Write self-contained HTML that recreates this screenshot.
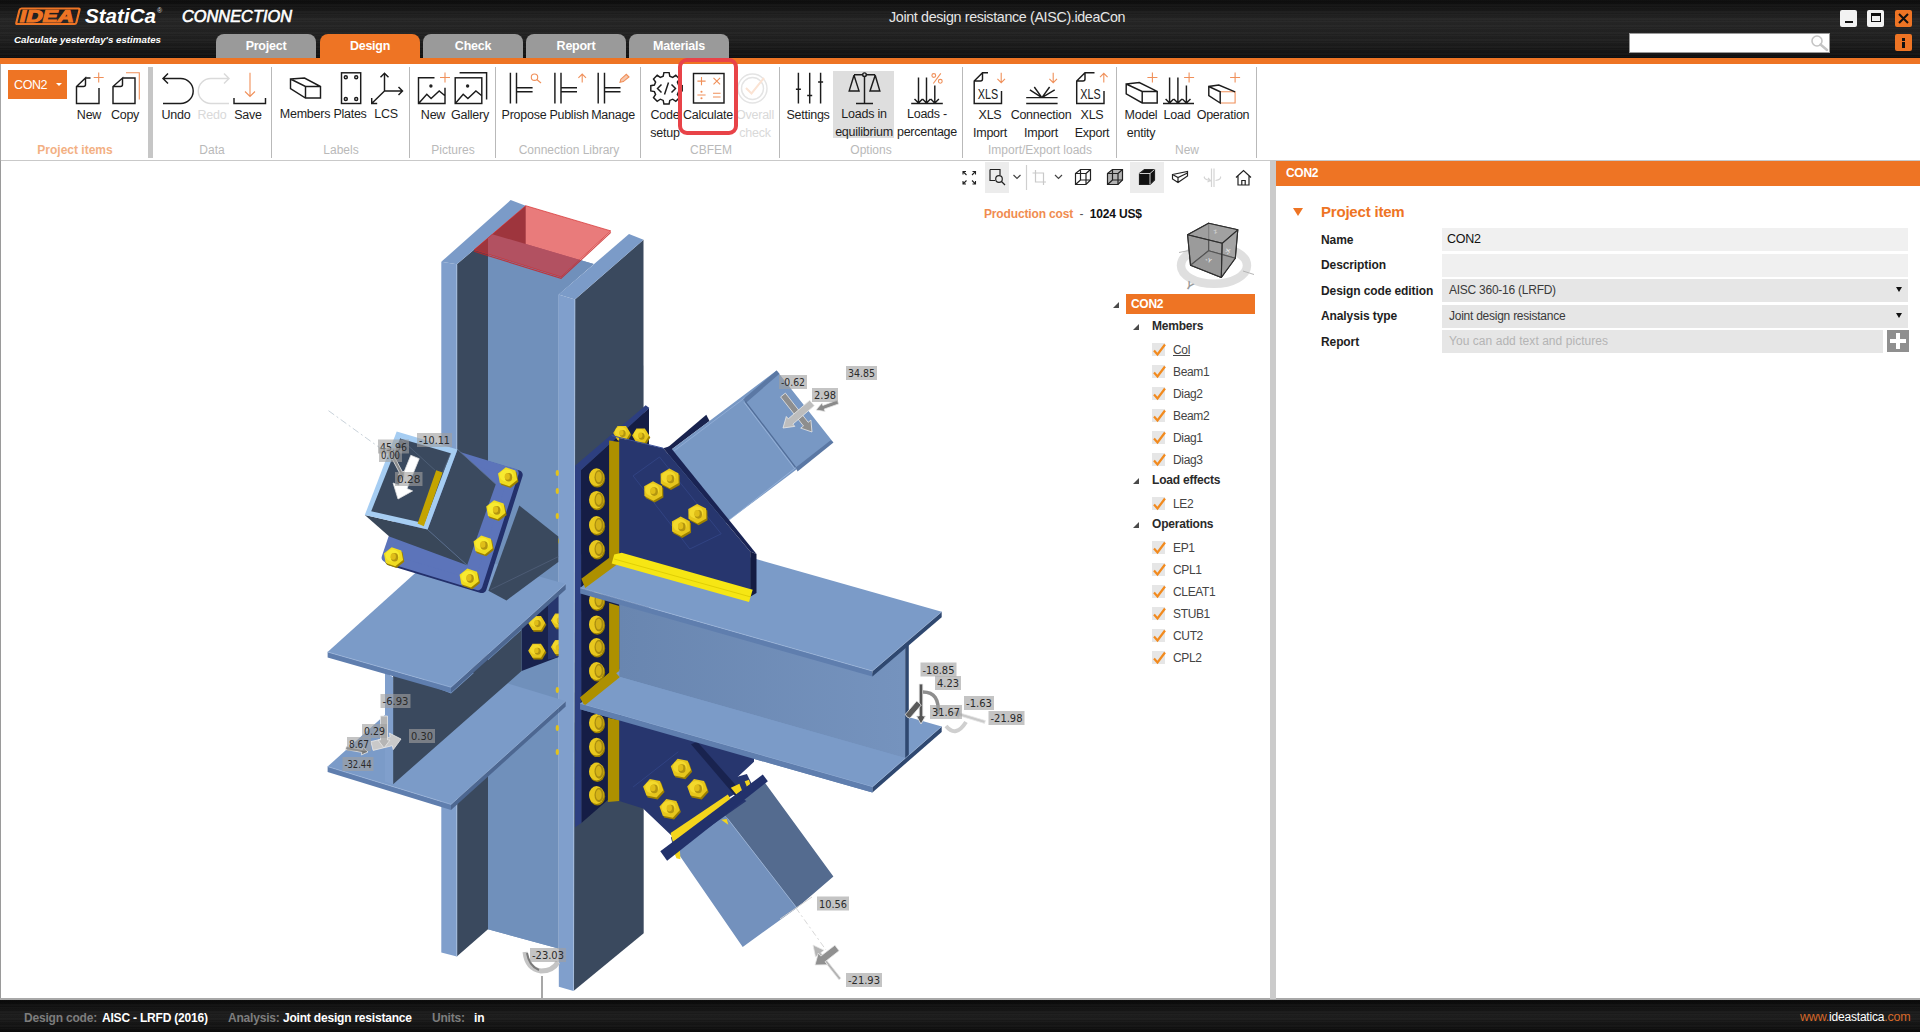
<!DOCTYPE html>
<html lang="en"><head><meta charset="utf-8"><title>IDEA StatiCa Connection</title>
<style>
html,body{margin:0;padding:0}
body{width:1920px;height:1032px;position:relative;overflow:hidden;background:#fff;font-family:"Liberation Sans",sans-serif;color:#1e1e1e}
.abs{position:absolute}
#hdr{position:absolute;left:0;top:0;width:1920px;height:58px;background:#0b0b0b;
 background-image:repeating-linear-gradient(180deg,rgba(255,255,255,.07) 0,rgba(255,255,255,0) 1px,rgba(255,255,255,.03) 2px,rgba(0,0,0,0) 3px,rgba(255,255,255,.05) 5px,rgba(0,0,0,0) 7px),linear-gradient(180deg,#080808 0,#222 35%,#1b1b1b 70%,#0b0b0b 100%)}
#obar{position:absolute;left:0;top:58px;width:1920px;height:6px;background:#ee7424}
.tab{position:absolute;top:34px;height:25px;width:100px;border-radius:8px 8px 0 0;background:#9a9a9a;color:#fff;font-weight:bold;font-size:12.5px;line-height:25px;text-align:center;letter-spacing:-.25px}
.tab.on{background:#ee7424}
#ribbon{position:absolute;left:0;top:64px;width:1920px;height:96px;background:#fff;border-bottom:1px solid #c9c9c9}
.sep{position:absolute;top:3px;width:1px;height:91px;background:#b9b9b9}
.glab{position:absolute;top:78px;height:16px;line-height:16px;font-size:12px;color:#b9b9b9;text-align:center;white-space:nowrap;transform:translateX(-50%)}
.rb{position:absolute;top:43px;font-size:12.5px;line-height:17.5px;color:#1e1e1e;text-align:center;white-space:nowrap;transform:translateX(-50%);letter-spacing:-.25px}
.rb.dis{color:#d9d9d9}
.ic{position:absolute;overflow:visible}
#status{position:absolute;left:0;top:1000px;width:1920px;height:32px;background:#0b0b0b;
 background-image:repeating-linear-gradient(180deg,rgba(255,255,255,.07) 0,rgba(255,255,255,0) 1px,rgba(255,255,255,.03) 2px,rgba(0,0,0,0) 3px,rgba(255,255,255,.05) 5px,rgba(0,0,0,0) 7px),linear-gradient(180deg,#050505 0,#1a1a1a 50%,#080808 100%)}
#status span{position:absolute;top:10px;font-size:12px;line-height:16px;font-weight:bold;white-space:nowrap;letter-spacing:-.2px}
.sg{color:#7d7d7d}.sw{color:#fff}
#split{position:absolute;left:1270px;top:161px;width:6px;height:838px;background:#cbcbcb}
#rhead{position:absolute;left:1276px;top:161px;width:644px;height:25px;background:#ee7424;color:#fff;font-weight:bold;font-size:12px;line-height:25px;text-indent:10px;letter-spacing:-.3px}
.plab{position:absolute;left:1321px;font-size:12px;line-height:16px;font-weight:bold;color:#1e1e1e;letter-spacing:-.1px;white-space:nowrap;-webkit-text-stroke:0}
.pfield{position:absolute;left:1442px;height:23px;background:#e8e8e8;font-size:12px;line-height:23px;color:#3a3a3a;white-space:nowrap}
.tree{position:absolute;font-size:12px;line-height:16px;color:#444;white-space:nowrap;letter-spacing:-.35px}
.tree.b{font-weight:bold;color:#2a2a2a;letter-spacing:-.2px;margin-left:1px}
.tri{position:absolute;width:0;height:0;border-left:6px solid transparent;border-bottom:6px solid #4a4a4a}
.cb{position:absolute;width:13px;height:13px;background:#e6e6e6}
</style></head><body>
<div id="hdr">
<svg class="abs" style="left:0;top:0" width="320" height="58" viewBox="0 0 320 58">
 <g transform="translate(14,6) skewX(-14)">
  <rect x="6.5" y="2.5" width="60" height="15.500" fill="none" stroke="#ee7424" stroke-width="2.2" rx="1.5"/>
  <text x="9" y="16.5" font-family="Liberation Sans,sans-serif" font-weight="bold" font-size="17" fill="#ee7424" stroke="#ee7424" stroke-width="1.100" textLength="54" lengthAdjust="spacingAndGlyphs">IDEA</text>
 </g>
 <text x="85" y="23" font-family="Liberation Sans,sans-serif" font-weight="bold" font-style="italic" font-size="20.5" fill="#fff" textLength="71" lengthAdjust="spacingAndGlyphs">StatiCa</text>
 <text x="157" y="13" font-family="Liberation Sans,sans-serif" font-size="7" fill="#ddd">®</text>
 <text x="182" y="22" font-family="Liberation Sans,sans-serif" font-style="italic" font-size="16.5" fill="#fff" textLength="110" lengthAdjust="spacingAndGlyphs" stroke="#fff" stroke-width=".650">CONNECTION</text>
 <text x="14" y="42.5" font-family="Liberation Sans,sans-serif" font-style="italic" font-weight="bold" font-size="9.5" fill="#fff" textLength="147" lengthAdjust="spacingAndGlyphs">Calculate yesterday's estimates</text>
</svg>
<div class="tab" style="left:216px">Project</div>
<div class="tab on" style="left:320px">Design</div>
<div class="tab" style="left:423px">Check</div>
<div class="tab" style="left:526px">Report</div>
<div class="tab" style="left:629px">Materials</div>
<div class="abs" style="left:889px;top:9px;width:234px;text-align:center;color:#e6e6e6;font-size:14.3px;line-height:16px;letter-spacing:-.35px;white-space:nowrap">Joint design resistance (AISC).ideaCon</div>
<div class="abs" style="left:1629px;top:33px;width:201px;height:20px;background:#fff;border:1px solid #999;box-sizing:border-box"></div>
<svg class="abs" style="left:1808px;top:33px" width="24" height="20" viewBox="0 0 24 20"><circle cx="9" cy="8" r="5" fill="none" stroke="#c4c4c4" stroke-width="1.6"/><path d="M12.5 11.5 L19 17" stroke="#c4c4c4" stroke-width="2.4" stroke-linecap="round"/></svg>
<div class="abs" style="left:1840px;top:10px;width:17px;height:17px;background:#f2f2f2;border-radius:2px"></div><div class="abs" style="left:1845px;top:21px;width:8px;height:2px;background:#111"></div>
<div class="abs" style="left:1867px;top:10px;width:17px;height:17px;background:#f2f2f2;border-radius:2px"></div><div class="abs" style="left:1871px;top:13px;width:10px;height:9px;border:1.5px solid #111;border-top-width:3px;box-sizing:border-box"></div>
<div class="abs" style="left:1895px;top:10px;width:17px;height:17px;background:#ee7424;border-radius:2px"></div>
<svg class="abs" style="left:1895px;top:10px" width="17" height="17" viewBox="0 0 17 17"><path d="M4 4 L13 13 M13 4 L4 13" stroke="#111" stroke-width="2"/></svg>
<div class="abs" style="left:1895px;top:34px;width:17px;height:17px;background:#ee7424;border-radius:2px"></div>
<div class="abs" style="left:1902px;top:38px;width:3px;height:3px;background:#111"></div><div class="abs" style="left:1902px;top:42px;width:3px;height:6px;background:#111"></div>
</div>
<div id="obar"></div>
<div id="ribbon">
<div class="abs" style="left:0;top:0;width:1px;height:97px;background:#a6a6a6"></div>
<div class="abs" style="left:833px;top:7px;width:61px;height:67px;background:#dedede"></div>
<div class="abs" style="left:148px;top:3px;width:5px;height:91px;background:#c6c6c6"></div>
<div class="sep" style="left:271px"></div><div class="sep" style="left:409px"></div><div class="sep" style="left:495px"></div>
<div class="sep" style="left:640px"></div><div class="sep" style="left:779px"></div><div class="sep" style="left:962px"></div>
<div class="sep" style="left:1116px"></div><div class="sep" style="left:1256px"></div>
<div class="abs" style="left:8px;top:6px;width:59px;height:29px;background:#ee7424;color:#fff;font-size:12.5px;line-height:30px;text-indent:6px;letter-spacing:-.4px">CON2</div>
<div class="abs" style="left:56px;top:19px;width:0;height:0;border-left:3px solid transparent;border-right:3px solid transparent;border-top:3.5px solid #fff"></div>
<div class="glab" style="left:75px;color:#f3b083;font-weight:bold">Project items</div>
<div class="glab" style="left:212px">Data</div>
<div class="glab" style="left:341px">Labels</div>
<div class="glab" style="left:453px">Pictures</div>
<div class="glab" style="left:569px">Connection Library</div>
<div class="glab" style="left:711px">CBFEM</div>
<div class="glab" style="left:871px">Options</div>
<div class="glab" style="left:1040px">Import/Export loads</div>
<div class="glab" style="left:1187px">New</div>
<div class="rb" style="left:89px">New</div>
<div class="rb" style="left:125px">Copy</div>
<div class="rb" style="left:176px">Undo</div>
<div class="rb dis" style="left:212px">Redo</div>
<div class="rb" style="left:248px">Save</div>
<div class="rb" style="left:305px;top:42px">Members</div>
<div class="rb" style="left:350px;top:42px">Plates</div>
<div class="rb" style="left:386px;top:42px">LCS</div>
<div class="rb" style="left:433px">New</div>
<div class="rb" style="left:470px">Gallery</div>
<div class="rb" style="left:524px">Propose</div>
<div class="rb" style="left:569px">Publish</div>
<div class="rb" style="left:613px">Manage</div>
<div class="rb" style="left:665px">Code<br>setup</div>
<div class="rb" style="left:708px">Calculate</div>
<div class="rb dis" style="left:755px">Overall<br>check</div>
<div class="rb" style="left:808px">Settings</div>
<div class="rb" style="left:864px;top:42px">Loads in<br>equilibrium</div>
<div class="rb" style="left:927px;top:42px">Loads -<br>percentage</div>
<div class="rb" style="left:990px">XLS<br>Import</div>
<div class="rb" style="left:1041px">Connection<br>Import</div>
<div class="rb" style="left:1092px">XLS<br>Export</div>
<div class="rb" style="left:1141px">Model<br>entity</div>
<div class="rb" style="left:1177px">Load</div>
<div class="rb" style="left:1223px">Operation</div>
<svg class="abs" style="left:0;top:0" width="1920" height="96" viewBox="0 64 1920 96" fill="none" stroke="#1c1c1c" stroke-width="1.45" stroke-linejoin="miter">
<g id="ic-new"><path d="M85.5 78H90.5M99 88V103.5H76.5V86.5L85.5 78V84.5Q85.5 86.5 83.5 86.5H76.5"/><path d="M98.7 72.5V82.5M93.7 77.5H103.7" stroke="#f0905a" stroke-width="1.1"/></g>
<g id="ic-copy"><path d="M122.5 78H135V103.5H113V86.5L122.5 78V84.5Q122.5 86.5 120.5 86.5H113"/><path d="M126 72.8H139.3V99.5" stroke="#f0905a" stroke-width="1.1"/></g>
<g id="ic-undo"><path d="M163 78.5H180.7A12.5 12.5 0 0 1 180.7 103.5H163M168 73.5L163 78.5L168 83.5"/></g>
<g id="ic-redo" stroke="#dadada"><path d="M229 78.5H210.8A12.5 12.5 0 0 0 210.8 103.5H229M224 73.5L229 78.5L224 83.5"/></g>
<g id="ic-save"><path d="M234 98V103.5H265.5V98"/><path d="M250 72.8V96.5M245 91.5L250 96.5L255 91.5" stroke="#f0905a" stroke-width="1.1"/></g>
<g id="ic-members"><path d="M290.5 79L304.5 78L320.5 86.5V98H305.5L290.5 88.5ZM290.5 79L305.5 86.5H320.5M305.5 86.5V98"/></g>
<g id="ic-plates"><rect x="341.5" y="72.8" width="19.2" height="30.7"/><circle cx="345.8" cy="77.3" r="1.5"/><circle cx="356.2" cy="77.3" r="1.5"/><circle cx="345.8" cy="99" r="1.5"/><circle cx="356.2" cy="99" r="1.5"/></g>
<g id="ic-lcs"><path d="M384.5 73.3V91H402.5M384.5 91L371.7 103.5M380.5 77.3L384.5 73.3L388.5 77.3M398.5 87L402.5 91L398.5 95M371.7 98V103.5H377.2"/></g>
<g id="ic-pnew"><path d="M434.5 77.8H418.5V103.5H445V87.7M418.8 103.3L426.8 94.3L431.1 98.6L439.2 91L445 95.7"/><circle cx="430.9" cy="86" r="1.7" fill="#222" stroke="none"/><path d="M445 72.5V82.5M440 77.5H450" stroke="#f0905a" stroke-width="1.1"/></g>
<g id="ic-gallery"><rect x="455.2" y="77.8" width="26.6" height="25.7"/><path d="M459.6 72.8H486.6V99.5M455.5 103.3L463.2 94.3L467.9 98.6L475.9 91L481.8 95.7"/><circle cx="467.6" cy="86" r="1.7" fill="#222" stroke="none"/></g>
<g id="ic-propose"><path d="M510.4 72.8V103.5M516.5 72.8V103.5M516.5 87.7H532.6M516.5 91.8H532.6"/><g stroke="#f0905a" stroke-width="1.1"><circle cx="534.5" cy="77.2" r="3.2"/><path d="M536.8 79.5L541 83"/></g></g>
<g id="ic-publish"><path d="M554.9 72.8V103.5M561 72.8V103.5M561 87.7H577M561 91.8H577"/><path d="M582.2 82.6V74M578.4 77.8L582.2 74L586 77.8" stroke="#f0905a" stroke-width="1.1"/></g>
<g id="ic-manage"><path d="M598.2 72.8V103.5M604.5 72.8V103.5M604.5 87.7H620.5M604.5 91.8H620.5"/><path d="M620 82.3L620.8 79.2L626.3 74.3L629 77L623.3 81.6Z" stroke="#f0905a" stroke-width="1.1" fill="#f0905a" fill-opacity=".5"/></g>
</svg>
</div>
<svg class="abs" style="left:0;top:64px" width="1920" height="96" viewBox="0 64 1920 96" fill="none" stroke="#1c1c1c" stroke-width="1.45" stroke-linejoin="miter">
<g id="ic-code"><path id="gear" d="M663.9 72.6h5.2l.7 3.6 2.9 1.2 3.1-2.1 3.7 3.7-2.1 3.1 1.2 2.9 3.6.7v5.2l-3.6.7-1.2 2.9 2.1 3.1-3.7 3.7-3.1-2.1-2.9 1.2-.7 3.6h-5.2l-.7-3.6-2.9-1.2-3.1 2.1-3.7-3.7 2.1-3.1-1.2-2.9-3.6-.7v-5.2l3.6-.7 1.2-2.9-2.100-3.1 3.7-3.7 3.1 2.1 2.9-1.2z"/><path d="M661.5 84.5L657.5 88.500L661.500 92.500M671.5 84.500L675.500 88.500L671.500 92.500M668.500 82.500L664.500 94.500"/></g>
<g id="ic-calc"><rect x="693.500" y="73.500" width="30.500" height="29.500" fill="#fff"/><g stroke="#f0905a" stroke-width="1.100"><path d="M701.500 77V85.200M697.400 81.100H705.600M713.500 77.800L720.100 84.400M720.100 77.800L713.500 84.400M697.400 95H705.600M713 93.200H720.600M713 97H720.600"/><circle cx="701.500" cy="91.800" r=".5"/><circle cx="701.500" cy="98.200" r=".5"/></g></g>
<g id="ic-overall" stroke="#e4e4e4"><circle cx="752.500" cy="88.500" r="14.500"/><circle cx="752.500" cy="88.500" r="11"/><path d="M746 88L751.500 93.500L764 78" stroke="#fbe3d3" stroke-width="2"/></g>
<g id="ic-settings"><path d="M798.400 72.800V103.500M809.700 72.800V103.500M820.600 72.800V103.500M795.900 89.200H800.900M807.200 95.400H812.200M818.100 81.900H823.100" /></g>
<g id="ic-scale"><path d="M864.500 76.500V103.500M856 103.500H873M854 74.700H862.700M866.300 74.700H875.200M854 75.300L849.200 90.900H859L854 75.300M875.200 75.300L870 90.900H879.800L875.200 75.300"/><circle cx="864.500" cy="74.700" r="1.800"/></g>
<g id="ic-loadsp"><path d="M911.200 103.500H942.800M918.500 77.500V103M926.500 77.500V103M934.800 85.500V103M914.500 99L918.500 103L922.500 99M922.500 99L926.500 103L930.500 99M930.700 99L934.800 103L938.900 99"/><g stroke="#f0905a" stroke-width="1.100"><circle cx="933.800" cy="75.500" r="1.900"/><circle cx="940.300" cy="81.300" r="1.900"/><path d="M940.800 73.300L933.300 83.500"/></g></g>
<g id="ic-xlsi"><path d="M988 72.800H982.500L974.200 81V103.500H1001.500V91M974.200 81H980.500Q982.500 81 982.500 79V72.800"/><path d="M1001.200 72.800V82.600M997.400 78.800L1001.200 82.600L1005 78.800" stroke="#f0905a" stroke-width="1.100"/></g>
<g id="ic-conni"><path d="M1026.200 97.600H1057.600M1026.200 103.500H1057.600M1041.900 97.600L1029.900 89.900M1041.900 97.600L1034.300 87M1041.900 97.600L1049.600 87M1041.900 97.600L1054.700 89.900"/><path d="M1053.200 72.800V82.600M1049.400 78.800L1053.200 82.600L1057 78.800" stroke="#f0905a" stroke-width="1.100"/></g>
<g id="ic-xlse"><path d="M1094.500 72.800H1085L1076.700 81V103.500H1104V91M1076.700 81H1083Q1085 81 1085 79V72.800"/><path d="M1103.800 82.600V73.300M1100 77.100L1103.800 73.300L1107.600 77.100" stroke="#f0905a" stroke-width="1.100"/></g>
<g id="ic-model"><path d="M1126.200 84L1139.300 82.600L1157.200 91.400V103H1142.200L1126.200 93.800ZM1126.200 84L1142.200 91.400H1157.200M1142.200 91.400V103"/><path d="M1152.400 72.500V82.500M1147.400 77.500H1157.400" stroke="#f0905a" stroke-width="1.100"/></g>
<g id="ic-load"><path d="M1163 103.500H1194M1169.600 77.500V103M1177.900 77.500V103M1186.400 85.500V103M1165.600 99L1169.600 103L1173.600 99M1173.800 99L1177.900 103L1182 99M1182.300 99L1186.400 103L1190.500 99"/><path d="M1189.100 72.500V82.500M1184.100 77.500H1194.100" stroke="#f0905a" stroke-width="1.100"/></g>
<g id="ic-oper"><path d="M1220.200 91.800H1235.100V103H1220.200" stroke="#f0905a" stroke-width="1.100"/><path d="M1235.100 91.800L1218.800 85.100L1208.800 86.500V95.700L1220.200 103V91.800L1208.800 86.500"/><path d="M1235.100 72.500V82.500M1230.100 77.500H1240.100" stroke="#f0905a" stroke-width="1.100"/></g>
<g font-family="Liberation Sans,sans-serif" font-size="14.500" fill="#1c1c1c" stroke="none"><text x="977.800" y="98.800" textLength="20.400" lengthAdjust="spacingAndGlyphs" transform="translate(0,0)">XLS</text><text x="1080.300" y="98.800" textLength="20.400" lengthAdjust="spacingAndGlyphs">XLS</text></g>
</svg>
<div class="abs" style="left:678px;top:58px;width:60px;height:77px;box-sizing:border-box;border:4px solid #e84348;border-radius:9px"></div>
<div id="view" class="abs" style="left:0;top:161px;width:1270px;height:838px;background:#fff;border-left:1px solid #9a9a9a;box-sizing:border-box"></div>
<div class="abs" style="left:0;top:998px;width:1920px;height:2px;background:#a8a8a8"></div>
<!--MODEL-->
<div class="abs" style="left:985px;top:162px;width:24px;height:31px;background:#ececec"></div>
<div class="abs" style="left:1130px;top:162px;width:34px;height:31px;background:#ececec"></div>
<svg class="abs" style="left:940px;top:158px" width="330" height="50" viewBox="940 158 330 50" fill="none" stroke="#222" stroke-width="1.200">
<path d="M963 174.500V171.500H966M963 171.500L966.500 175M975.500 174.500V171.500H972.500M975.500 171.500L972 175M963 181V184H966M963 184L966.500 180.500M975.500 181V184H972.500M975.500 184L972 180.500" stroke-width="1.100"/>
<path d="M990 169.500H1000V175M995 180.500H990V169.500"/><circle cx="999" cy="179" r="3.300"/><path d="M1001.500 181.500L1005 185"/>
<path d="M1013.500 175L1017 178.500L1020.500 175" stroke="#444"/>
<path d="M1026.500 165V190" stroke="#cfcfcf"/>
<path d="M1035.500 170V182H1046M1032.500 173H1043.500V185" stroke="#c9c9c9"/>
<path d="M1055 175L1058.500 178.500L1062 175" stroke="#444"/>
<path d="M1075.500 173.500L1080.500 169.500H1090.500V180L1086 184.500H1075.500ZM1075.500 173.500H1086V184.500M1086 173.500L1090.500 169.500M1080.500 169.500V180H1090.500M1080.500 180L1075.500 184.500"/>
<path d="M1107.500 173.500L1112.500 169.500H1122.500V180L1118 184.500H1107.500Z" fill="#b5b5b5"/><path d="M1107.500 173.500H1118V184.500M1118 173.500L1122.500 169.500M1112.500 169.500V180H1122.500M1112.500 180L1107.500 184.500"/>
<path d="M1139.500 173.500L1144.500 169.500H1154.500V180L1150 184.500H1139.500Z" fill="#111"/><path d="M1139.500 173.500H1150V184.500M1150 173.500L1154.500 169.500" stroke="#fff" stroke-width=".8"/>
<path d="M1172.500 174.500L1187.500 171.500V176L1178 182.500L1172.500 179ZM1172.500 174.500L1178 177.500L1187.500 173M1178 177.500V182.500"/>
<path d="M1211.500 168.500V187M1214 168.500V187M1204.500 176.500Q1203 179 1210 180.500M1215.500 180.500Q1221.500 179.500 1220.500 176.500M1207.500 182L1210.500 180.500L1208 178" stroke="#d4d4d4"/>
<path d="M1236 177.500L1243.500 170.500L1251 177.500M1238 176V185H1249V176M1241.800 185V180.500H1245.200V185"/>
</svg>
<div class="abs" style="left:984px;top:207px;font-size:12px;line-height:15px;font-weight:bold;white-space:nowrap;letter-spacing:-.150px"><span style="color:#f08c50">Production cost</span><span style="color:#555;font-weight:normal">&nbsp; - &nbsp;</span><span style="color:#111">1024 US$</span></div>
<svg class="abs" style="left:0;top:161px" width="1270" height="838" viewBox="0 161 1270 838" shape-rendering="geometricPrecision">
<defs><linearGradient id="wg" gradientUnits="userSpaceOnUse" x1="619" y1="0" x2="905" y2="0"><stop offset="0" stop-color="#6986b0"/><stop offset="1" stop-color="#7593be"/></linearGradient></defs>
<polygon points="488,233 593.7,264 558.5,294.6 558.5,948.6 488,929.3" fill="#7090bb" />
<polygon points="456.8,264.3 525.7,205.7 525.7,900 488,929.3 456.8,956.5" fill="#3a495e" />
<polygon points="488,233 593.7,264 558.5,294.6 558.5,948.6 488,929.3" fill="#7090bb" />
<polygon points="441.3,261.8 456.8,264.3 456.8,956.5 441.3,952.5" fill="#809fcc" />
<polygon points="441.3,261.8 510.6,200.1 525.7,205.7 456.8,264.3" fill="#7b9bc8" />
<polyline points="456.8,264.3 456.8,956.5" fill="none" stroke="#a9c1e2" stroke-width="0.8" />
<!--LEFTBEAM-->
<polygon points="327.6,766.6 451,804.4 565.7,701.1 442.2,663.3" fill="#7b9bc8" />
<polygon points="327.6,766.6 451,804.4 451,809.9 327.6,772.1" fill="#5f7eae" />
<polygon points="451,804.4 565.7,701.1 565.7,706.6 451,809.9" fill="#4d6791" />
<polygon points="521.6,628 558.6,595.3 558.6,657 521.6,670.9" fill="#18224d" />
<polygon points="548,605.4 558.6,595.3 558.6,657 548,659.5" fill="#27366e" />
<polygon points="393.1,670.9 451,693.5 521.6,630 521.6,670.9 393.1,784.2" fill="#3a495e" />
<polygon points="385,672.1 393.1,677.2 393.1,784.2 385,781.7" fill="#809fcc" />
<polygon points="546.4,624.8 542.2,631.8 533.7,631.8 529.4,624.8 533.7,617.8 542.2,617.8" fill="#9c8000" />
<polygon points="545.2,623 541,630 532.5,630 528.2,623 532.5,616 541,616" fill="#e6c61c" />
<ellipse cx="535.7" cy="621.8" rx="5.78" ry="5.1" fill="#f3d92c"/>
<ellipse cx="537.7" cy="623.6" rx="3.06" ry="3.57" fill="#b39510"/>
<ellipse cx="536.4" cy="622.7" rx="2.21" ry="2.72" fill="#e0be18"/>
<polygon points="546.4,652.5 542.2,659.5 533.7,659.5 529.4,652.5 533.7,645.5 542.2,645.5" fill="#9c8000" />
<polygon points="545.2,650.7 541,657.7 532.5,657.7 528.2,650.7 532.5,643.7 541,643.7" fill="#e6c61c" />
<ellipse cx="535.7" cy="649.5" rx="5.78" ry="5.1" fill="#f3d92c"/>
<ellipse cx="537.7" cy="651.3" rx="3.06" ry="3.57" fill="#b39510"/>
<ellipse cx="536.4" cy="650.4" rx="2.21" ry="2.72" fill="#e0be18"/>
<polygon points="569.1,622.3 564.8,629.3 556.3,629.3 552.1,622.3 556.3,615.3 564.8,615.3" fill="#9c8000" />
<polygon points="567.9,620.5 563.6,627.5 555.1,627.5 550.9,620.5 555.1,613.5 563.6,613.5" fill="#e6c61c" />
<ellipse cx="558.4" cy="619.3" rx="5.78" ry="5.1" fill="#f3d92c"/>
<ellipse cx="560.4" cy="621.1" rx="3.06" ry="3.57" fill="#b39510"/>
<ellipse cx="559.1" cy="620.2" rx="2.21" ry="2.72" fill="#e0be18"/>
<polygon points="569.1,648.7 564.8,655.7 556.3,655.7 552.1,648.7 556.3,641.7 564.8,641.7" fill="#9c8000" />
<polygon points="567.9,646.9 563.6,653.9 555.1,653.9 550.9,646.9 555.1,639.9 563.6,639.9" fill="#e6c61c" />
<ellipse cx="558.4" cy="645.7" rx="5.78" ry="5.1" fill="#f3d92c"/>
<ellipse cx="560.4" cy="647.5" rx="3.06" ry="3.57" fill="#b39510"/>
<ellipse cx="559.1" cy="646.6" rx="2.21" ry="2.72" fill="#e0be18"/>
<polygon points="574.9,299.6 643.5,239.8 643.7,933.3 573.5,991" fill="#3a495e" />
<polygon points="558.5,294.6 574.9,299.6 573.5,991 558.8,986.7" fill="#809fcc" />
<polygon points="558.5,294.6 629,234.1 643.5,239.8 574.9,299.6" fill="#7b9bc8" />
<polyline points="574.9,299.6 573.5,991" fill="none" stroke="#a9c1e2" stroke-width="0.8" />
<polygon points="558.6,707.4 565.7,701.1 558.6,698.9" fill="#7b9bc8" />
<polygon points="558.6,707.4 565.7,701.1 565.7,706.6 558.6,713" fill="#4d6791" />
<polygon points="327.6,652 451,687.2 565.7,583.9 442.2,548.7" fill="#7b9bc8" />
<polygon points="327.6,652 451,687.2 451,692.8 327.6,657.5" fill="#5f7eae" />
<polygon points="451,687.2 565.7,583.9 565.7,589.5 451,692.8" fill="#4d6791" />
<polyline points="327.6,652 451,687.2 565.7,583.9" fill="none" stroke="#9db7dd" stroke-width="0.7" />
<polyline points="327.6,766.6 451,804.4 565.7,701.1" fill="none" stroke="#9db7dd" stroke-width="0.7" />
<ellipse cx="557.3" cy="473" rx="1.6" ry="3" fill="#e2c21a"/>
<ellipse cx="557.3" cy="491" rx="1.6" ry="3" fill="#e2c21a"/>
<ellipse cx="557.3" cy="516" rx="1.6" ry="3" fill="#e2c21a"/>
<ellipse cx="557.3" cy="541" rx="1.6" ry="3" fill="#e2c21a"/>
<ellipse cx="557.3" cy="648" rx="1.6" ry="3" fill="#e2c21a"/>
<ellipse cx="557.3" cy="690" rx="1.6" ry="3" fill="#e2c21a"/>
<ellipse cx="557.3" cy="728" rx="1.6" ry="3" fill="#e2c21a"/>
<ellipse cx="557.3" cy="752" rx="1.6" ry="3" fill="#e2c21a"/>
<polygon points="474.1,249.8 525.7,205.7 610.8,230.9 561,276.9" fill="#dc2a2a" fill-opacity=".62" stroke="#d42a2a" stroke-opacity=".7" stroke-width="1"/>
<polyline points="474.1,251.3 561,278.4 610.8,232.4" fill="none" stroke="#c92222" stroke-width="1.2" stroke-opacity=".8"/>
<polyline points="328.5,410.7 390.3,455.4" fill="none" stroke="#c9d2da" stroke-width="1" stroke-dasharray="7 3 2 3"/>
<polygon points="519.3,505.5 558.3,536.4 558.3,562 506.5,600.4 488.4,590.8" fill="#3a495e" />
<polyline points="490.5,589.7 558.3,556.7" fill="none" stroke="#50607a" stroke-width="0.8" />
<polygon points="428.2,447.7 518.2,474.9 482,588.6 389.4,560.6" fill="#23306b" stroke="#23306b" stroke-width="9" stroke-linejoin="round"/>
<polygon points="424.2,445.9 514.2,473.1 477.9,585.7 386.1,557.7" fill="#5c74ba" stroke="#5c74ba" stroke-width="9" stroke-linejoin="round"/>
<polygon points="457.5,449.4 495.8,484.2 467.1,565.2 427.6,529.6" fill="#3b4a5f" />
<polygon points="364.8,515.1 427.6,529.6 467.1,565.2 389.3,536.4" fill="#394759" />
<polyline points="427.6,529.6 467.1,565.2" fill="none" stroke="#5f7391" stroke-width="0.8" />
<polyline points="457.5,449.4 495.8,484.2" fill="none" stroke="#5f7391" stroke-width="0.8" />
<polygon points="396.7,431.5 457.5,449.4 427.6,529.6 364.8,515.1" fill="#a6cdf2" />
<polygon points="400.1,438.4 450.7,453.3 424.4,523.2 371.2,511.3" fill="#3a495e" />
<polygon points="436.2,470.3 442.6,472.5 423.8,526.2 417.6,523.6" fill="#c4a400" />
<polyline points="400.1,438.4 435.1,470.3" fill="none" stroke="#56677f" stroke-width="0.7" />
<polyline points="450.7,453.3 442.6,472.5" fill="none" stroke="#56677f" stroke-width="0.7" />
<polygon points="518.4,481.8 510.6,488 501,484.7 499.2,475.2 507,469 516.6,472.3" fill="#9c8000" />
<polygon points="517.2,480 509.4,486.2 499.8,482.9 498,473.4 505.8,467.2 515.4,470.5" fill="#f0dc20" />
<ellipse cx="506.6" cy="475.5" rx="6.936" ry="6.12" fill="#f8ea30"/>
<ellipse cx="508.6" cy="477.3" rx="3.672" ry="4.284" fill="#b39510"/>
<ellipse cx="507.3" cy="476.4" rx="2.652" ry="3.264" fill="#e0be18"/>
<polygon points="506.6,514.9 498.8,521.1 489.2,517.8 487.4,508.3 495.2,502.1 504.8,505.4" fill="#9c8000" />
<polygon points="505.4,513.1 497.6,519.3 488,516 486.2,506.5 494,500.3 503.6,503.6" fill="#f0dc20" />
<ellipse cx="494.8" cy="508.6" rx="6.936" ry="6.12" fill="#f8ea30"/>
<ellipse cx="496.8" cy="510.4" rx="3.672" ry="4.284" fill="#b39510"/>
<ellipse cx="495.5" cy="509.5" rx="2.652" ry="3.264" fill="#e0be18"/>
<polygon points="493.9,550 486.1,556.2 476.5,552.9 474.7,543.4 482.5,537.2 492.1,540.5" fill="#9c8000" />
<polygon points="492.7,548.2 484.9,554.4 475.3,551.1 473.5,541.6 481.3,535.4 490.9,538.7" fill="#f0dc20" />
<ellipse cx="482.1" cy="543.7" rx="6.936" ry="6.12" fill="#f8ea30"/>
<ellipse cx="484.1" cy="545.5" rx="3.672" ry="4.284" fill="#b39510"/>
<ellipse cx="482.8" cy="544.6" rx="2.652" ry="3.264" fill="#e0be18"/>
<polygon points="480,583.1 472.2,589.3 462.6,586 460.8,576.5 468.6,570.3 478.2,573.6" fill="#9c8000" />
<polygon points="478.8,581.3 471,587.5 461.4,584.2 459.6,574.7 467.4,568.5 477,571.8" fill="#f0dc20" />
<ellipse cx="468.2" cy="576.8" rx="6.936" ry="6.12" fill="#f8ea30"/>
<ellipse cx="470.2" cy="578.6" rx="3.672" ry="4.284" fill="#b39510"/>
<ellipse cx="468.9" cy="577.7" rx="2.652" ry="3.264" fill="#e0be18"/>
<polygon points="404.3,561.8 396.5,568 386.9,564.7 385.1,555.2 392.9,549 402.5,552.3" fill="#9c8000" />
<polygon points="403.1,560 395.3,566.2 385.7,562.9 383.9,553.4 391.7,547.2 401.3,550.5" fill="#f0dc20" />
<ellipse cx="392.5" cy="555.5" rx="6.936" ry="6.12" fill="#f8ea30"/>
<ellipse cx="394.5" cy="557.3" rx="3.672" ry="4.284" fill="#b39510"/>
<ellipse cx="393.2" cy="556.4" rx="2.652" ry="3.264" fill="#e0be18"/>
<!--RIGHT-->
<polygon points="581,470 649,408 649,764 581.4,823" fill="#151d45" />
<polygon points="575,465.8 581,470 581.4,823 575.1,827.3" fill="#2d3f80" />
<polygon points="575,465.8 645.7,405.3 649.4,407.9 581,470" fill="#2d3f80" />
<ellipse cx="597.3" cy="478.4" rx="7.8" ry="9.2" fill="#9c8000"/>
<ellipse cx="596.5" cy="477.2" rx="7.5" ry="8.9" fill="#e8c81e"/>
<ellipse cx="599.1" cy="477.2" rx="4.6" ry="7.2" fill="#a88c10"/>
<ellipse cx="598.7" cy="476.9" rx="3" ry="5.4" fill="#d4b318"/>
<ellipse cx="597.3" cy="501" rx="7.8" ry="9.2" fill="#9c8000"/>
<ellipse cx="596.5" cy="499.8" rx="7.5" ry="8.9" fill="#e8c81e"/>
<ellipse cx="599.1" cy="499.8" rx="4.6" ry="7.2" fill="#a88c10"/>
<ellipse cx="598.7" cy="499.5" rx="3" ry="5.4" fill="#d4b318"/>
<ellipse cx="597.3" cy="526.2" rx="7.8" ry="9.2" fill="#9c8000"/>
<ellipse cx="596.5" cy="525" rx="7.5" ry="8.9" fill="#e8c81e"/>
<ellipse cx="599.1" cy="525" rx="4.6" ry="7.2" fill="#a88c10"/>
<ellipse cx="598.7" cy="524.7" rx="3" ry="5.4" fill="#d4b318"/>
<ellipse cx="597.3" cy="550.2" rx="7.8" ry="9.2" fill="#9c8000"/>
<ellipse cx="596.5" cy="549" rx="7.5" ry="8.9" fill="#e8c81e"/>
<ellipse cx="599.1" cy="549" rx="4.6" ry="7.2" fill="#a88c10"/>
<ellipse cx="598.7" cy="548.7" rx="3" ry="5.4" fill="#d4b318"/>
<ellipse cx="597.3" cy="601.7" rx="7.8" ry="9.2" fill="#9c8000"/>
<ellipse cx="596.5" cy="600.5" rx="7.5" ry="8.9" fill="#e8c81e"/>
<ellipse cx="599.1" cy="600.5" rx="4.6" ry="7.2" fill="#a88c10"/>
<ellipse cx="598.7" cy="600.2" rx="3" ry="5.4" fill="#d4b318"/>
<ellipse cx="597.3" cy="625.6" rx="7.8" ry="9.2" fill="#9c8000"/>
<ellipse cx="596.5" cy="624.4" rx="7.5" ry="8.9" fill="#e8c81e"/>
<ellipse cx="599.1" cy="624.4" rx="4.6" ry="7.2" fill="#a88c10"/>
<ellipse cx="598.7" cy="624.1" rx="3" ry="5.4" fill="#d4b318"/>
<ellipse cx="597.3" cy="648.2" rx="7.8" ry="9.2" fill="#9c8000"/>
<ellipse cx="596.5" cy="647" rx="7.5" ry="8.9" fill="#e8c81e"/>
<ellipse cx="599.1" cy="647" rx="4.6" ry="7.2" fill="#a88c10"/>
<ellipse cx="598.7" cy="646.7" rx="3" ry="5.4" fill="#d4b318"/>
<ellipse cx="597.3" cy="672.2" rx="7.8" ry="9.2" fill="#9c8000"/>
<ellipse cx="596.5" cy="671" rx="7.5" ry="8.9" fill="#e8c81e"/>
<ellipse cx="599.1" cy="671" rx="4.6" ry="7.2" fill="#a88c10"/>
<ellipse cx="598.7" cy="670.7" rx="3" ry="5.4" fill="#d4b318"/>
<ellipse cx="597.3" cy="724" rx="7.8" ry="9.2" fill="#9c8000"/>
<ellipse cx="596.5" cy="722.8" rx="7.5" ry="8.9" fill="#e8c81e"/>
<ellipse cx="599.1" cy="722.8" rx="4.6" ry="7.2" fill="#a88c10"/>
<ellipse cx="598.7" cy="722.5" rx="3" ry="5.4" fill="#d4b318"/>
<ellipse cx="597.3" cy="747.9" rx="7.8" ry="9.2" fill="#9c8000"/>
<ellipse cx="596.5" cy="746.7" rx="7.5" ry="8.9" fill="#e8c81e"/>
<ellipse cx="599.1" cy="746.7" rx="4.6" ry="7.2" fill="#a88c10"/>
<ellipse cx="598.7" cy="746.4" rx="3" ry="5.4" fill="#d4b318"/>
<ellipse cx="597.3" cy="772.7" rx="7.8" ry="9.2" fill="#9c8000"/>
<ellipse cx="596.5" cy="771.5" rx="7.5" ry="8.9" fill="#e8c81e"/>
<ellipse cx="599.1" cy="771.5" rx="4.6" ry="7.2" fill="#a88c10"/>
<ellipse cx="598.7" cy="771.2" rx="3" ry="5.4" fill="#d4b318"/>
<ellipse cx="597.3" cy="796.2" rx="7.8" ry="9.2" fill="#9c8000"/>
<ellipse cx="596.5" cy="795" rx="7.5" ry="8.9" fill="#e8c81e"/>
<ellipse cx="599.1" cy="795" rx="4.6" ry="7.2" fill="#a88c10"/>
<ellipse cx="598.7" cy="794.7" rx="3" ry="5.4" fill="#d4b318"/>
<polygon points="631.4,434.8 627.2,441.8 618.7,441.8 614.4,434.8 618.7,427.8 627.2,427.8" fill="#9c8000" />
<polygon points="630.2,433 626,440 617.5,440 613.2,433 617.5,426 626,426" fill="#e6c61c" />
<ellipse cx="620.7" cy="431.8" rx="5.78" ry="5.1" fill="#f3d92c"/>
<ellipse cx="622.7" cy="433.6" rx="3.06" ry="3.57" fill="#b39510"/>
<ellipse cx="621.4" cy="432.7" rx="2.21" ry="2.72" fill="#e0be18"/>
<polygon points="650.3,437.4 646.1,444.4 637.6,444.4 633.3,437.4 637.6,430.4 646.1,430.4" fill="#9c8000" />
<polygon points="649.1,435.6 644.9,442.6 636.4,442.6 632.1,435.6 636.4,428.6 644.9,428.6" fill="#e6c61c" />
<ellipse cx="639.6" cy="434.4" rx="5.78" ry="5.1" fill="#f3d92c"/>
<ellipse cx="641.6" cy="436.2" rx="3.06" ry="3.57" fill="#b39510"/>
<ellipse cx="640.3" cy="435.3" rx="2.21" ry="2.72" fill="#e0be18"/>
<polygon points="580.2,703.8 872.4,786.9 941.7,726.4 649.4,643.3" fill="#7b9bc8" />
<polygon points="580.2,703.8 872.4,786.9 872.4,792.5 580.2,709.3" fill="#5f7eae" />
<polygon points="872.4,786.9 941.7,726.4 941.7,732 872.4,792.5" fill="#2f4870" />
<polygon points="619.2,600.5 872.4,673.5 905.2,645.8 905.2,757.9 619.2,676.8" fill="url(#wg)" />
<polygon points="905.2,646 908.8,643 908.8,756 905.2,759" fill="#2f4870" />
<polygon points="609.1,603 619.2,606 619.2,671 609.1,678.1" fill="#ad9000" />
<polygon points="580.2,697.5 612.9,669.8 619.7,677.3 584.4,705.8" fill="#ad9000" />
<polygon points="580.2,703.8 872.4,786.9 941.7,726.4 649.4,643.3" fill="#7b9bc8" style="display:none"/>
<polygon points="580.2,703.8 872.4,786.9 905.2,757.9 619.2,676.8 614.2,673.5" fill="#7b9bc8" />
<polygon points="580.2,697.5 612.9,669.8 619.7,677.3 584.4,705.8" fill="#ad9000" />
<polygon points="580.2,587.9 872.4,671 941.7,611.8 649.4,528.7" fill="#7b9bc8" />
<polygon points="580.2,587.9 872.4,671 872.4,676.6 580.2,593.4" fill="#5f7eae" />
<polygon points="872.4,671 941.7,611.8 941.7,617.3 872.4,676.6" fill="#2f4870" />
<polyline points="580.2,587.9 872.4,671 941.7,611.8" fill="none" stroke="#9db7dd" stroke-width="0.7" />
<polyline points="580.2,703.8 872.4,786.9 941.7,726.4" fill="none" stroke="#9db7dd" stroke-width="0.7" />
<polygon points="667.9,447.2 706.3,414.7 709.5,421 670.8,450.1" fill="#18224d" />
<polygon points="655,470 670.8,450.1 776.6,370.5 833,442 727.2,521.6 715,535" fill="#7898c4" />
<polygon points="795.8,467.6 830.7,440.2 833.5,442.5 797.5,471.5" fill="#5b78a4" />
<polygon points="742.9,399.5 776.6,370.5 779.5,373.7 746.4,402.4" fill="#5b78a4" />
<polyline points="745.2,401.3 795.8,467.6" fill="none" stroke="#506c97" stroke-width="1.2" />
<polyline points="744,402.3 794.6,468.6" fill="none" stroke="#a9c1e2" stroke-width="0.6" />
<polyline points="674,451 744.5,398" fill="none" stroke="#9db7dd" stroke-width="0.6" />
<polyline points="727.2,521.6 795.8,467.6" fill="none" stroke="#9db7dd" stroke-width="0.7" />
<polygon points="619.2,438.1 663.3,448.2 750.2,551.5 750.2,596.8 614.2,555.3" fill="#27366e" />
<polygon points="750.2,551.5 756.5,554 756.5,593.1 750.2,596.8" fill="#141c42" />
<polygon points="663.3,448.2 669.6,446.2 756.5,554 750.2,551.5" fill="#1a2454" />
<polyline points="611.7,435.6 663.3,448.2" fill="none" stroke="#3f549c" stroke-width="1" />
<polyline points="633.1,475.9 659.5,457 721.2,533.8 689.8,549 633.1,475.9" fill="none" stroke="#384b90" stroke-width="0.6" />
<polygon points="609.1,440.6 619.2,441.9 619.2,554 609.1,561.6" fill="#ad9000" />
<polygon points="581.4,578.7 614.2,554 621,561.6 585.2,588" fill="#ad9000" />
<polygon points="614.2,554.5 621.7,552.7 752.7,589.8 749,601.9 611.7,563.6" fill="#f6e614" />
<polyline points="614.2,559 750.2,596.8" fill="none" stroke="#d9c800" stroke-width="0.8" />
<polygon points="663.4,497.5 654.6,502.6 645.6,497.9 645.4,488.1 654.2,483 663.2,487.7" fill="#9c8000" />
<polygon points="662.2,495.7 653.4,500.8 644.4,496.1 644.2,486.3 653,481.2 662,485.9" fill="#e6c61c" />
<ellipse cx="652.2" cy="489.8" rx="7.004" ry="6.18" fill="#f3d92c"/>
<ellipse cx="654.2" cy="491.6" rx="3.708" ry="4.326" fill="#b39510"/>
<ellipse cx="652.9" cy="490.7" rx="2.678" ry="3.296" fill="#e0be18"/>
<polygon points="679.8,484.9 671,490 662,485.3 661.8,475.5 670.6,470.4 679.6,475.1" fill="#9c8000" />
<polygon points="678.6,483.1 669.8,488.2 660.8,483.5 660.6,473.7 669.4,468.6 678.4,473.3" fill="#e6c61c" />
<ellipse cx="668.6" cy="477.2" rx="7.004" ry="6.18" fill="#f3d92c"/>
<ellipse cx="670.6" cy="479" rx="3.708" ry="4.326" fill="#b39510"/>
<ellipse cx="669.3" cy="478.1" rx="2.678" ry="3.296" fill="#e0be18"/>
<polygon points="691.1,532.8 682.3,537.9 673.3,533.2 673.1,523.4 681.9,518.3 690.9,523" fill="#9c8000" />
<polygon points="689.9,531 681.1,536.1 672.1,531.4 671.9,521.6 680.7,516.5 689.7,521.2" fill="#e6c61c" />
<ellipse cx="679.9" cy="525.1" rx="7.004" ry="6.18" fill="#f3d92c"/>
<ellipse cx="681.9" cy="526.9" rx="3.708" ry="4.326" fill="#b39510"/>
<ellipse cx="680.6" cy="526" rx="2.678" ry="3.296" fill="#e0be18"/>
<polygon points="707.5,520.2 698.7,525.3 689.7,520.6 689.5,510.8 698.3,505.7 707.3,510.4" fill="#9c8000" />
<polygon points="706.3,518.4 697.5,523.5 688.5,518.8 688.3,509 697.1,503.9 706.1,508.6" fill="#e6c61c" />
<ellipse cx="696.3" cy="512.5" rx="7.004" ry="6.18" fill="#f3d92c"/>
<ellipse cx="698.3" cy="514.3" rx="3.708" ry="4.326" fill="#b39510"/>
<ellipse cx="697" cy="513.4" rx="2.678" ry="3.296" fill="#e0be18"/>
<!--LOWER-->
<polygon points="672.1,847.5 721.2,812.2 727.5,818.5 796.8,907.9 742.7,947 678.4,853.8" fill="#7391bd" />
<polygon points="721.2,812.2 760.3,776.9 765.3,783.2 833.4,876.4 796.8,907.9 727.5,818.5" fill="#546b8f" />
<polyline points="727.5,818.5 796.8,907.9" fill="none" stroke="#9db7dd" stroke-width="0.7" />
<polygon points="619.2,715.2 754,756 754,761.8 737.6,776.9 742.7,789.5 727.5,798.3 670.9,834.9 643.1,808.4 619.2,800.9" fill="#27366e" />
<polygon points="691,744.2 697.3,741.7 745.2,795.8 739.4,800.9" fill="#19234f" />
<polyline points="633.1,787 678.4,751.7" fill="none" stroke="#384b90" stroke-width="0.6" />
<polygon points="607.9,717.7 619.2,720.2 619.2,800.9 607.9,802.1" fill="#ad9000" />
<polygon points="670.9,837.4 736.4,794.6 746.4,800.9 674.6,851.2" fill="#27366e" />
<polygon points="736.4,776.9 746.9,773.9 752,784.5 741.9,790.8" fill="#27366e" />
<polygon points="670.6,833.1 727.8,794.6 732.8,801.9 672.9,841.9" fill="#f4d51c" />
<polygon points="730.8,787.8 739.4,783.7 741.9,790.3 736.4,794.6" fill="#f4d51c" />
<polygon points="744.7,781.2 749,779.7 750.5,785.2 746.9,786.7" fill="#f4d51c" />
<polygon points="673.9,851.8 679.9,850.2 680.4,859.3 676.4,858.3" fill="#f4d51c" />
<polygon points="721.2,819.8 726.8,819 728.3,824.8" fill="#f4d51c" />
<polygon points="660.3,851.2 762.8,774.4 767.9,781.2 667.1,860.8" fill="#22316b" />
<polygon points="692.2,771.8 685.4,779.2 675.3,777.2 672,768 678.8,760.6 688.9,762.6" fill="#9c8000" />
<polygon points="691,770 684.2,777.4 674.1,775.4 670.8,766.2 677.6,758.8 687.7,760.8" fill="#e6c61c" />
<ellipse cx="679.9" cy="766.9" rx="7.004" ry="6.18" fill="#f3d92c"/>
<ellipse cx="681.9" cy="768.7" rx="3.708" ry="4.326" fill="#b39510"/>
<ellipse cx="680.6" cy="767.8" rx="2.678" ry="3.296" fill="#e0be18"/>
<polygon points="664.5,792 657.7,799.4 647.6,797.4 644.3,788.2 651.1,780.8 661.2,782.8" fill="#9c8000" />
<polygon points="663.3,790.2 656.5,797.6 646.4,795.6 643.1,786.4 649.9,779 660,781" fill="#e6c61c" />
<ellipse cx="652.2" cy="787.1" rx="7.004" ry="6.18" fill="#f3d92c"/>
<ellipse cx="654.2" cy="788.9" rx="3.708" ry="4.326" fill="#b39510"/>
<ellipse cx="652.9" cy="788" rx="2.678" ry="3.296" fill="#e0be18"/>
<polygon points="708.6,792 701.8,799.4 691.7,797.4 688.4,788.2 695.2,780.8 705.3,782.8" fill="#9c8000" />
<polygon points="707.4,790.2 700.6,797.6 690.5,795.6 687.2,786.4 694,779 704.1,781" fill="#e6c61c" />
<ellipse cx="696.3" cy="787.1" rx="7.004" ry="6.18" fill="#f3d92c"/>
<ellipse cx="698.3" cy="788.9" rx="3.708" ry="4.326" fill="#b39510"/>
<ellipse cx="697" cy="788" rx="2.678" ry="3.296" fill="#e0be18"/>
<polygon points="680.9,812.1 674.1,819.5 664,817.5 660.7,808.3 667.5,800.9 677.6,802.9" fill="#9c8000" />
<polygon points="679.7,810.3 672.9,817.7 662.8,815.7 659.5,806.5 666.3,799.1 676.4,801.1" fill="#e6c61c" />
<ellipse cx="668.6" cy="807.2" rx="7.004" ry="6.18" fill="#f3d92c"/>
<ellipse cx="670.6" cy="809" rx="3.708" ry="4.326" fill="#b39510"/>
<ellipse cx="669.3" cy="808.1" rx="2.678" ry="3.296" fill="#e0be18"/>
<polygon points="580.2,703.8 872.4,786.9 872.4,792.5 580.2,709.3" fill="#5f7eae" />
<!--ARROWS-->
<polygon points="780.6,396.9 803.5,426 800.7,428.1 812,432 810.9,420.1 808.2,422.3 785.4,393.1" fill="#8e8e8e" stroke="#e8e8e8" stroke-width=".8"/>
<polygon points="809.7,400.3 788.3,418.8 786.3,416.5 783,428 794.8,426.4 792.9,424.1 814.3,405.7" fill="#bdbdbd" stroke="#e8e8e8" stroke-width=".8"/>
<polygon points="837.3,400.1 822.8,405.4 822,403 816,410 825.1,411.5 824.2,409.1 838.7,403.9" fill="#8a8a8a" stroke="#e8e8e8" stroke-width=".8"/>
<polygon points="410.8,455.3 398.7,485.3 393.1,483 398,499 412.6,490.9 407,488.6 419.2,458.7" fill="#ffffff" stroke="#e0e0e0" stroke-width=".8"/>
<polygon points="386.7,448.7 399.9,473.4 398.1,474.4 404,478 404.3,471.1 402.5,472 389.3,447.3" fill="#8a8a8a" stroke="#e8e8e8" stroke-width=".8"/>
<polygon points="373.1,750.4 392.3,745.7 393.3,749.6 401,739 389.3,733.1 390.2,737 370.9,741.6" fill="#c9c9c9" stroke="#e8e8e8" stroke-width=".8"/>
<polygon points="380.5,716 380.5,740 378,740 384,748 390,740 387.5,740 387.5,716" fill="#b5b5b5" stroke="#e8e8e8" stroke-width=".8"/>
<polygon points="345.7,749.5 361.8,752.4 361.4,754.9 368,752 362.8,747 362.4,749.5 346.3,746.5" fill="#777" stroke="#e8e8e8" stroke-width=".8"/>
<polygon points="919.2,684 919.2,716 916.5,716 921,724 925.5,716 922.8,716 922.8,684" fill="#555" stroke="#e8e8e8" stroke-width=".8"/>
<polygon points="916.7,701 905.4,714.3 905.4,714.3 907,717 909.9,718.2 909.9,718.2 921.3,705" fill="#5a5a5a" stroke="#e8e8e8" stroke-width=".8"/>
<path d="M923 692 Q940 692 938 714" fill="none" stroke="#8e8e8e" stroke-width="3.5"/>
<polygon points="985.4,720.6 960.1,712.9 960.8,710.5 952,712 958.5,718.1 959.2,715.8 984.6,723.4" fill="#c9c9c9" stroke="#e8e8e8" stroke-width=".8"/>
<path d="M946 726 Q956 738 966 722" fill="none" stroke="#cfcfcf" stroke-width="4"/>
<path d="M525 952 Q527 969 541 971 Q553 971 558 962" fill="none" stroke="#c4c4c4" stroke-width="5"/>
<path d="M527 953 Q529 966 539 970" fill="none" stroke="#7a7a7a" stroke-width="2"/>
<polyline points="542,976 542,998" fill="none" stroke="#8a8a8a" stroke-width="1.5" />
<polyline points="780,919 812,897" fill="none" stroke="#cfcfcf" stroke-width="1" />
<polyline points="796,908 826,950" fill="none" stroke="#d8d8d8" stroke-width="1" stroke-dasharray="6 3 2 3"/>
<polygon points="841,978.2 820.8,952.8 824.1,950.2 813,945 815.5,957 818.9,954.4 839,979.8" fill="#b4b4b4" stroke="#e8e8e8" stroke-width=".8"/>
<polygon points="834.9,945.2 820.8,956.1 818.3,953 815,965 827.5,964.8 825.1,961.7 839.1,950.8" fill="#909090" stroke="#e8e8e8" stroke-width=".8"/>
<!--LABELS-->
<rect x="846" y="366" width="31" height="14" fill="#a0a0a0" fill-opacity=".62"/>
<text x="861.5" y="377" font-family="DejaVu Sans,Liberation Sans,sans-serif" font-size="10.500" fill="#2a2a2a" text-anchor="middle" textLength="27" lengthAdjust="spacingAndGlyphs">34.85</text>
<rect x="779" y="375" width="28" height="14" fill="#a0a0a0" fill-opacity=".62"/>
<text x="793" y="386" font-family="DejaVu Sans,Liberation Sans,sans-serif" font-size="10.500" fill="#2a2a2a" text-anchor="middle" textLength="24" lengthAdjust="spacingAndGlyphs">-0.62</text>
<rect x="812" y="388" width="26" height="14" fill="#a0a0a0" fill-opacity=".62"/>
<text x="825" y="399" font-family="DejaVu Sans,Liberation Sans,sans-serif" font-size="10.500" fill="#2a2a2a" text-anchor="middle" textLength="22" lengthAdjust="spacingAndGlyphs">2.98</text>
<rect x="417" y="433" width="35" height="14" fill="#a0a0a0" fill-opacity=".62"/>
<text x="434.5" y="444" font-family="DejaVu Sans,Liberation Sans,sans-serif" font-size="10.500" fill="#2a2a2a" text-anchor="middle" textLength="31" lengthAdjust="spacingAndGlyphs">-10.11</text>
<rect x="378" y="439.5" width="31" height="14" fill="#a0a0a0" fill-opacity=".62"/>
<text x="393.5" y="450.5" font-family="DejaVu Sans,Liberation Sans,sans-serif" font-size="10.500" fill="#2a2a2a" text-anchor="middle" textLength="27" lengthAdjust="spacingAndGlyphs">45.96</text>
<rect x="379" y="448" width="23" height="14" fill="#a0a0a0" fill-opacity=".62"/>
<text x="390.5" y="459" font-family="DejaVu Sans,Liberation Sans,sans-serif" font-size="10.500" fill="#2a2a2a" text-anchor="middle" textLength="19" lengthAdjust="spacingAndGlyphs">0.00</text>
<rect x="395" y="472" width="27.5" height="14" fill="#a0a0a0" fill-opacity=".62"/>
<text x="408.75" y="483" font-family="DejaVu Sans,Liberation Sans,sans-serif" font-size="10.500" fill="#2a2a2a" text-anchor="middle" textLength="23.5" lengthAdjust="spacingAndGlyphs">0.28</text>
<rect x="920.5" y="662.5" width="36" height="14" fill="#a0a0a0" fill-opacity=".62"/>
<text x="938.5" y="673.5" font-family="DejaVu Sans,Liberation Sans,sans-serif" font-size="10.500" fill="#2a2a2a" text-anchor="middle" textLength="32" lengthAdjust="spacingAndGlyphs">-18.85</text>
<rect x="935" y="676" width="26" height="14" fill="#a0a0a0" fill-opacity=".62"/>
<text x="948" y="687" font-family="DejaVu Sans,Liberation Sans,sans-serif" font-size="10.500" fill="#2a2a2a" text-anchor="middle" textLength="22" lengthAdjust="spacingAndGlyphs">4.23</text>
<rect x="964" y="696" width="30" height="14" fill="#a0a0a0" fill-opacity=".62"/>
<text x="979" y="707" font-family="DejaVu Sans,Liberation Sans,sans-serif" font-size="10.500" fill="#2a2a2a" text-anchor="middle" textLength="26" lengthAdjust="spacingAndGlyphs">-1.63</text>
<rect x="930" y="705" width="32" height="14" fill="#a0a0a0" fill-opacity=".62"/>
<text x="946" y="716" font-family="DejaVu Sans,Liberation Sans,sans-serif" font-size="10.500" fill="#2a2a2a" text-anchor="middle" textLength="28" lengthAdjust="spacingAndGlyphs">31.67</text>
<rect x="988.5" y="711" width="36" height="14" fill="#a0a0a0" fill-opacity=".62"/>
<text x="1006.5" y="722" font-family="DejaVu Sans,Liberation Sans,sans-serif" font-size="10.500" fill="#2a2a2a" text-anchor="middle" textLength="32" lengthAdjust="spacingAndGlyphs">-21.98</text>
<rect x="380.5" y="694" width="30" height="14" fill="#a0a0a0" fill-opacity=".62"/>
<text x="395.5" y="705" font-family="DejaVu Sans,Liberation Sans,sans-serif" font-size="10.500" fill="#2a2a2a" text-anchor="middle" textLength="26" lengthAdjust="spacingAndGlyphs">-6.93</text>
<rect x="362" y="724" width="25" height="14" fill="#a0a0a0" fill-opacity=".62"/>
<text x="374.5" y="735" font-family="DejaVu Sans,Liberation Sans,sans-serif" font-size="10.500" fill="#2a2a2a" text-anchor="middle" textLength="21" lengthAdjust="spacingAndGlyphs">0.29</text>
<rect x="409" y="729" width="26" height="14" fill="#a0a0a0" fill-opacity=".62"/>
<text x="422" y="740" font-family="DejaVu Sans,Liberation Sans,sans-serif" font-size="10.500" fill="#2a2a2a" text-anchor="middle" textLength="22" lengthAdjust="spacingAndGlyphs">0.30</text>
<rect x="347" y="737" width="24" height="14" fill="#a0a0a0" fill-opacity=".62"/>
<text x="359" y="748" font-family="DejaVu Sans,Liberation Sans,sans-serif" font-size="10.500" fill="#2a2a2a" text-anchor="middle" textLength="20" lengthAdjust="spacingAndGlyphs">8.67</text>
<rect x="342.5" y="757" width="31" height="14" fill="#a0a0a0" fill-opacity=".62"/>
<text x="358" y="768" font-family="DejaVu Sans,Liberation Sans,sans-serif" font-size="10.500" fill="#2a2a2a" text-anchor="middle" textLength="27" lengthAdjust="spacingAndGlyphs">-32.44</text>
<rect x="817" y="896.5" width="32" height="14" fill="#a0a0a0" fill-opacity=".62"/>
<text x="833" y="907.5" font-family="DejaVu Sans,Liberation Sans,sans-serif" font-size="10.500" fill="#2a2a2a" text-anchor="middle" textLength="28" lengthAdjust="spacingAndGlyphs">10.56</text>
<rect x="530" y="948" width="36" height="14" fill="#a0a0a0" fill-opacity=".62"/>
<text x="548" y="959" font-family="DejaVu Sans,Liberation Sans,sans-serif" font-size="10.500" fill="#2a2a2a" text-anchor="middle" textLength="32" lengthAdjust="spacingAndGlyphs">-23.03</text>
<rect x="846" y="973" width="36" height="14" fill="#a0a0a0" fill-opacity=".62"/>
<text x="864" y="984" font-family="DejaVu Sans,Liberation Sans,sans-serif" font-size="10.500" fill="#2a2a2a" text-anchor="middle" textLength="32" lengthAdjust="spacingAndGlyphs">-21.93</text>
</svg>
<svg class="abs" style="left:1160px;top:210px" width="110" height="85" viewBox="1160 210 110 85">
<ellipse cx="1214" cy="265.500" rx="33" ry="18.300" fill="none" stroke="#dfdfdf" stroke-width="8.500"/>
<path d="M1179 252.500L1189 250.500M1243 271L1254 274.500" stroke="#b5b5b5" stroke-width="1"/>
<g stroke="#2e2e2e" stroke-width="1.100" stroke-linejoin="round">
<polygon points="1208.600,223.200 1237.800,229.800 1235.300,258.200 1208.600,250.800" fill="#a3a3a3"/>
<polygon points="1187.600,234.700 1208.600,223.200 1208.600,250.800 1190.500,265.200" fill="#9b9b9b"/>
<polygon points="1190.500,265.200 1208.600,250.800 1235.300,258.200 1221.300,277.500" fill="#959595"/>
<polygon points="1187.600,234.700 1208.600,223.200 1237.800,229.800 1222.200,243.300" fill="#a0a0a0" fill-opacity=".75"/>
<polygon points="1187.600,234.700 1222.200,243.300 1221.300,277.500 1190.500,265.200" fill="#9a9a9a" fill-opacity=".35"/>
<polygon points="1222.200,243.300 1237.800,229.800 1235.300,258.200 1221.300,277.500" fill="#a6a6a6" fill-opacity=".35"/>
</g>
<text x="1205" y="261" font-family="Liberation Sans,sans-serif" font-size="6" font-weight="bold" fill="#e6e6e6" transform="rotate(20 1205 261)">-Y</text>
<text x="1229" y="255" font-family="Liberation Sans,sans-serif" font-size="6" font-weight="bold" fill="#e6e6e6" transform="rotate(-75 1229 255)">-X</text>
<text x="1213" y="234" font-family="Liberation Sans,sans-serif" font-size="5" font-weight="bold" fill="#d6d6d6" transform="rotate(160 1215 232)">Z</text>
<text x="1185" y="289" font-family="Liberation Sans,sans-serif" font-size="11" font-weight="bold" fill="#9a9a9a" transform="rotate(30 1188 287)">Y</text>
</svg>
<div class="abs" style="left:1126px;top:294px;width:129px;height:20px;background:#ee7424;color:#fff;font-weight:bold;font-size:12px;line-height:20px;text-indent:5px;letter-spacing:-.3px">CON2</div>
<div class="tri" style="left:1113px;top:302px"></div>
<div class="tri" style="left:1133px;top:323.5px"></div>
<div class="tree b" style="left:1151px;top:317.5px">Members</div>
<div class="tri" style="left:1133px;top:477.5px"></div>
<div class="tree b" style="left:1151px;top:471.5px">Load effects</div>
<div class="tri" style="left:1133px;top:521.5px"></div>
<div class="tree b" style="left:1151px;top:515.5px">Operations</div>
<div class="cb" style="left:1152px;top:342.5px"></div>
<svg class="abs" style="left:1150px;top:340.5px" width="18" height="18" viewBox="0 0 18 18"><path d="M4 9.5L7.5 13.5L15 3.5" fill="none" stroke="#f28a1e" stroke-width="2.2"/></svg>
<div class="tree" style="left:1173px;top:341.5px"><span style="text-decoration:underline">Col</span></div>
<div class="cb" style="left:1152px;top:364.5px"></div>
<svg class="abs" style="left:1150px;top:362.5px" width="18" height="18" viewBox="0 0 18 18"><path d="M4 9.5L7.5 13.5L15 3.5" fill="none" stroke="#f28a1e" stroke-width="2.2"/></svg>
<div class="tree" style="left:1173px;top:363.5px"><span>Beam1</span></div>
<div class="cb" style="left:1152px;top:386.5px"></div>
<svg class="abs" style="left:1150px;top:384.5px" width="18" height="18" viewBox="0 0 18 18"><path d="M4 9.5L7.5 13.5L15 3.5" fill="none" stroke="#f28a1e" stroke-width="2.2"/></svg>
<div class="tree" style="left:1173px;top:385.5px"><span>Diag2</span></div>
<div class="cb" style="left:1152px;top:408.5px"></div>
<svg class="abs" style="left:1150px;top:406.5px" width="18" height="18" viewBox="0 0 18 18"><path d="M4 9.5L7.5 13.5L15 3.5" fill="none" stroke="#f28a1e" stroke-width="2.2"/></svg>
<div class="tree" style="left:1173px;top:407.5px"><span>Beam2</span></div>
<div class="cb" style="left:1152px;top:430.5px"></div>
<svg class="abs" style="left:1150px;top:428.5px" width="18" height="18" viewBox="0 0 18 18"><path d="M4 9.5L7.5 13.5L15 3.5" fill="none" stroke="#f28a1e" stroke-width="2.2"/></svg>
<div class="tree" style="left:1173px;top:429.5px"><span>Diag1</span></div>
<div class="cb" style="left:1152px;top:452.5px"></div>
<svg class="abs" style="left:1150px;top:450.5px" width="18" height="18" viewBox="0 0 18 18"><path d="M4 9.5L7.5 13.5L15 3.5" fill="none" stroke="#f28a1e" stroke-width="2.2"/></svg>
<div class="tree" style="left:1173px;top:451.5px"><span>Diag3</span></div>
<div class="cb" style="left:1152px;top:496.5px"></div>
<svg class="abs" style="left:1150px;top:494.5px" width="18" height="18" viewBox="0 0 18 18"><path d="M4 9.5L7.5 13.5L15 3.5" fill="none" stroke="#f28a1e" stroke-width="2.2"/></svg>
<div class="tree" style="left:1173px;top:495.5px"><span>LE2</span></div>
<div class="cb" style="left:1152px;top:540.5px"></div>
<svg class="abs" style="left:1150px;top:538.5px" width="18" height="18" viewBox="0 0 18 18"><path d="M4 9.5L7.5 13.5L15 3.5" fill="none" stroke="#f28a1e" stroke-width="2.2"/></svg>
<div class="tree" style="left:1173px;top:539.5px"><span>EP1</span></div>
<div class="cb" style="left:1152px;top:562.5px"></div>
<svg class="abs" style="left:1150px;top:560.5px" width="18" height="18" viewBox="0 0 18 18"><path d="M4 9.5L7.5 13.5L15 3.5" fill="none" stroke="#f28a1e" stroke-width="2.2"/></svg>
<div class="tree" style="left:1173px;top:561.5px"><span>CPL1</span></div>
<div class="cb" style="left:1152px;top:584.5px"></div>
<svg class="abs" style="left:1150px;top:582.5px" width="18" height="18" viewBox="0 0 18 18"><path d="M4 9.5L7.5 13.5L15 3.5" fill="none" stroke="#f28a1e" stroke-width="2.2"/></svg>
<div class="tree" style="left:1173px;top:583.5px"><span>CLEAT1</span></div>
<div class="cb" style="left:1152px;top:606.5px"></div>
<svg class="abs" style="left:1150px;top:604.5px" width="18" height="18" viewBox="0 0 18 18"><path d="M4 9.5L7.5 13.5L15 3.5" fill="none" stroke="#f28a1e" stroke-width="2.2"/></svg>
<div class="tree" style="left:1173px;top:605.5px"><span>STUB1</span></div>
<div class="cb" style="left:1152px;top:628.5px"></div>
<svg class="abs" style="left:1150px;top:626.5px" width="18" height="18" viewBox="0 0 18 18"><path d="M4 9.5L7.5 13.5L15 3.5" fill="none" stroke="#f28a1e" stroke-width="2.2"/></svg>
<div class="tree" style="left:1173px;top:627.5px"><span>CUT2</span></div>
<div class="cb" style="left:1152px;top:650.5px"></div>
<svg class="abs" style="left:1150px;top:648.5px" width="18" height="18" viewBox="0 0 18 18"><path d="M4 9.5L7.5 13.5L15 3.5" fill="none" stroke="#f28a1e" stroke-width="2.2"/></svg>
<div class="tree" style="left:1173px;top:649.5px"><span>CPL2</span></div>
<div id="split"></div>
<div id="rhead">CON2</div>
<div class="abs" style="left:1293px;top:208px;width:0;height:0;border-left:5.500px solid transparent;border-right:5.500px solid transparent;border-top:8px solid #ee7424"></div>
<div class="abs" style="left:1321px;top:203px;font-size:15px;line-height:18px;font-weight:bold;color:#ee7424;letter-spacing:-.200px;white-space:nowrap">Project item</div>
<div class="plab" style="top:232px">Name</div>
<div class="plab" style="top:257px">Description</div>
<div class="plab" style="top:283px">Design code edition</div>
<div class="plab" style="top:308px">Analysis type</div>
<div class="plab" style="top:334px">Report</div>
<div class="pfield" style="top:228px;width:466px;background:#f0f0f0;color:#111;text-indent:5px;font-size:12.500px;letter-spacing:-.300px">CON2</div>
<div class="pfield" style="top:254px;width:466px;background:#f0f0f0"></div>
<div class="pfield" style="top:279px;width:466px;background:#e6e6e6;text-indent:7px;letter-spacing:-.250px">AISC 360-16 (LRFD)</div>
<div class="pfield" style="top:304.500px;width:466px;background:#e6e6e6;text-indent:7px;letter-spacing:-.250px">Joint design resistance</div>
<div class="pfield" style="top:329.500px;width:441px;background:#e6e6e6;text-indent:7px;color:#b4b4b4;letter-spacing:.050px">You can add text and pictures</div>
<div class="abs" style="left:1896px;top:287px;width:0;height:0;border-left:3.500px solid transparent;border-right:3.500px solid transparent;border-top:5px solid #111"></div>
<div class="abs" style="left:1896px;top:313px;width:0;height:0;border-left:3.500px solid transparent;border-right:3.500px solid transparent;border-top:5px solid #111"></div>
<div class="abs" style="left:1887px;top:330px;width:22px;height:22px;background:#8f8f8f"></div>
<div class="abs" style="left:1896px;top:333px;width:4px;height:16px;background:#fff"></div><div class="abs" style="left:1890px;top:339px;width:16px;height:4px;background:#fff"></div>
<div id="status">
<span class="sg" style="left:24px">Design code:</span><span class="sw" style="left:102px">AISC - LRFD (2016)</span>
<span class="sg" style="left:228px">Analysis:</span><span class="sw" style="left:283px">Joint design resistance</span>
<span class="sg" style="left:432px">Units:</span><span class="sw" style="left:474px">in</span>
<span style="left:1800px;top:9px;font-weight:normal;color:#d4682a;font-size:12.500px;letter-spacing:-.200px">www.<span style="position:static;color:#fff;font-weight:normal">ideastatica</span>.com</span>
</div>
</body></html>
